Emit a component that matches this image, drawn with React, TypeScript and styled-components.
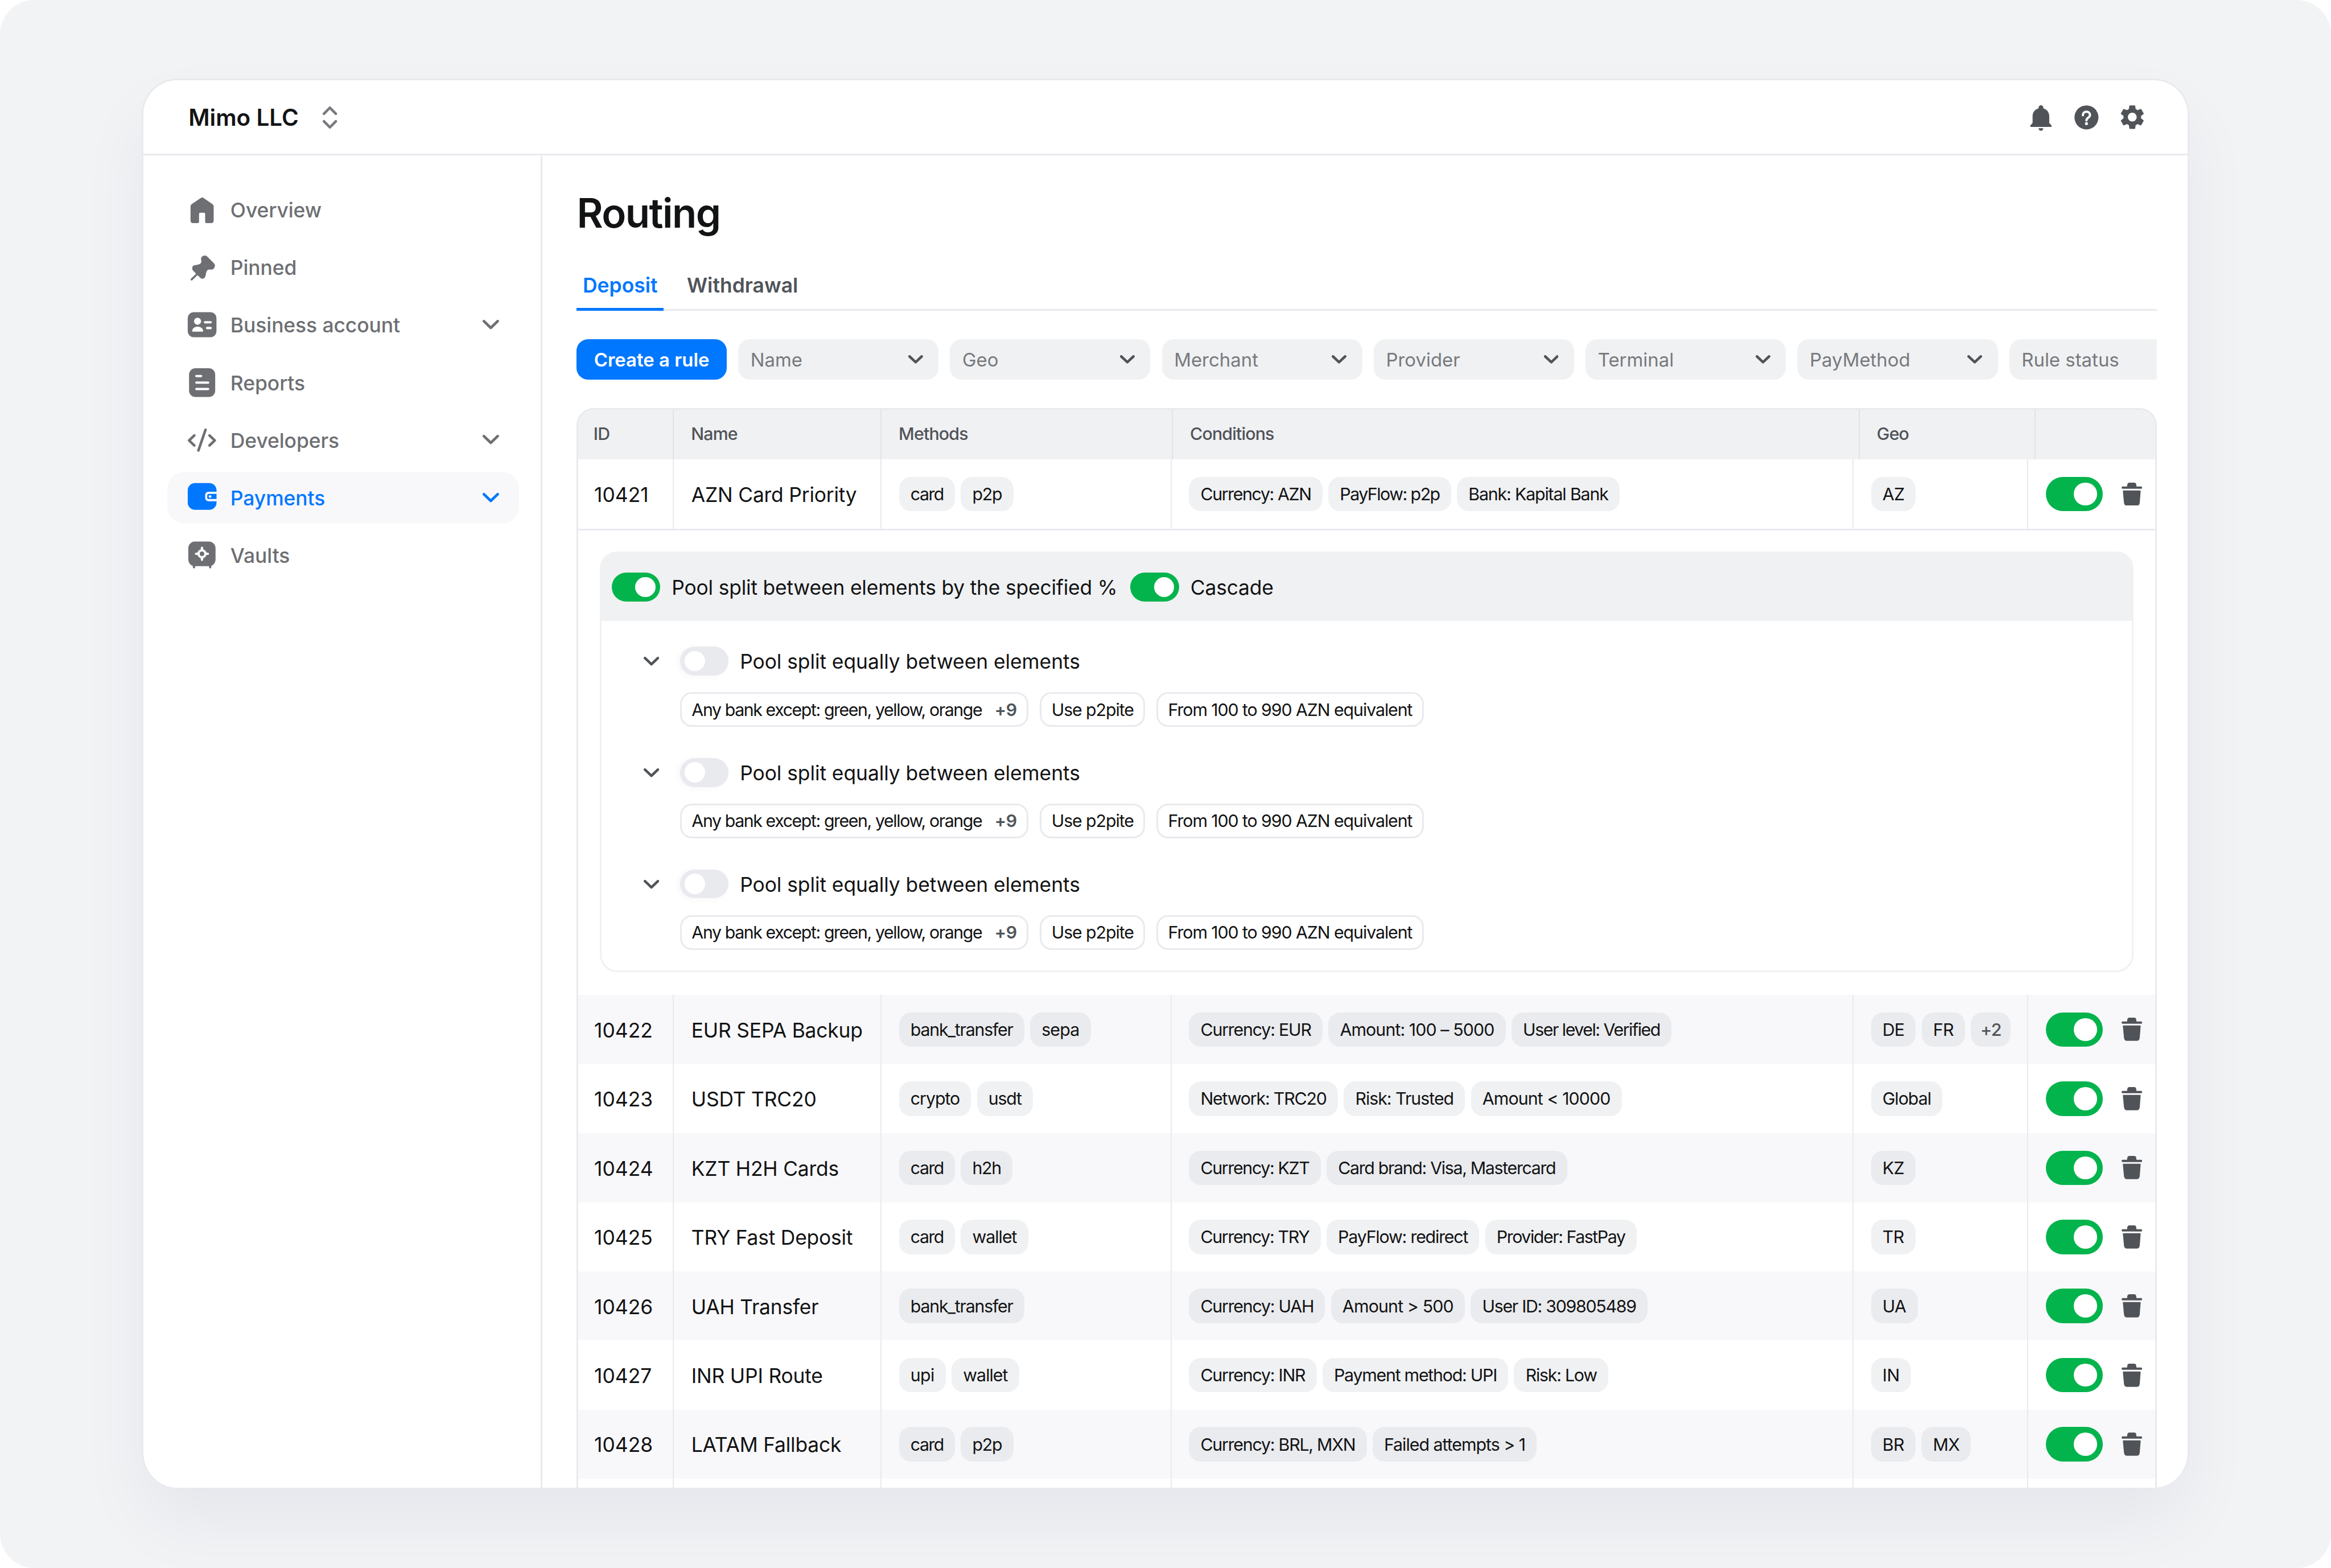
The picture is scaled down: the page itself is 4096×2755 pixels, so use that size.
import React from "react";
import styled, { createGlobalStyle, css } from "styled-components";
import { MdSettings } from "react-icons/md";

const s = (n: number) => `${Math.round(n * 0.9771 * 100) / 100}px`;

const c = {
  ink: "#121314",
  text2: "#505459",
  text3: "#6d6f73",
  text4: "#77797d",
  blue: "#0077ff",
  green: "#03b44c",
  line: "#e9eaee",
  fill: "#f0f1f3",
  stripe: "#f8f8fa",
};

const Global = createGlobalStyle`
  * { box-sizing: border-box; }
  html, body { margin: 0; background: #ffffff; }
  body { font-family: Inter, "Liberation Sans", sans-serif; color: ${c.ink}; overflow: hidden; }
`;

const Stage = styled.div`
  width: 4096px;
  height: 2755px;
  padding: ${s(141)} ${s(255)} ${s(144)};
  border-radius: ${s(62)};
  background: #f2f3f5;
  overflow: hidden;
`;

const Card = styled.div`
  height: 100%;
  display: flex;
  flex-direction: column;
  background: #fff;
  border: 3px solid ${c.line};
  border-bottom: 0;
  border-radius: ${s(64)};
  overflow: hidden;
  box-shadow: 0 ${s(62)} ${s(125)} rgba(20, 24, 70, 0.05);
`;

const TopBar = styled.header`
  flex: none;
  height: ${s(135)};
  display: flex;
  align-items: center;
  justify-content: space-between;
  padding: ${s(2)} ${s(68.5)} 0 ${s(81)};
  border-bottom: 3px solid ${c.line};
`;

const Company = styled.div`
  display: flex;
  align-items: center;
  gap: ${s(42)};
  font-size: ${s(41.4)};
  font-weight: 600;
`;

const TopActions = styled.div`
  display: flex;
  gap: ${s(20.2)};
  color: ${c.text2};
`;

const IconFrame = styled.span`
  flex: none;
  width: ${s(62)};
  height: ${s(62)};
  display: flex;
  align-items: center;
  justify-content: center;
  svg {
    display: block;
  }
`;

const Body = styled.div`
  flex: 1;
  min-height: 0;
  display: flex;
`;

const Sidebar = styled.nav`
  flex: none;
  width: ${s(717.5)};
  padding: ${s(51)} ${s(38.8)} 0 ${s(43.2)};
  display: flex;
  flex-direction: column;
  gap: ${s(9.9)};
  border-right: 3px solid ${c.line};
`;

const NavItem = styled.div<{ $active?: boolean }>`
  flex: none;
  height: ${s(93.7)};
  display: flex;
  align-items: center;
  padding: 0 ${s(36)} 0 ${s(31.4)};
  border-radius: ${s(31)};
  font-size: ${s(36.3)};
  font-weight: 500;
  letter-spacing: ${s(-0.1)};
  color: ${(p) => (p.$active ? c.blue : c.text3)};
  background: ${(p) => (p.$active ? c.stripe : "transparent")};
`;

const NavLabel = styled.span`
  flex: 1;
  margin-left: ${s(19.7)};
  padding-top: ${s(2.6)};
`;

const Main = styled.main`
  flex: 1;
  min-width: 0;
  padding: ${s(53)} ${s(55.5)} 0 ${s(61.6)};
  display: flex;
  flex-direction: column;
`;

const Title = styled.h1`
  margin: 0;
  font-size: ${s(72.5)};
  line-height: ${s(104)};
  font-weight: 600;
  letter-spacing: ${s(-1.6)};
`;

const Tabs = styled.div`
  height: ${s(123)};
  display: flex;
  align-items: flex-end;
  gap: ${s(31)};
  box-shadow: inset 0 -3px 0 ${c.line};
`;

const Tab = styled.div<{ $active?: boolean }>`
  padding: 0 ${s(10.8)} ${s(13.4)};
  border-bottom: 5px solid ${(p) => (p.$active ? c.blue : "transparent")};
  font-size: ${s(36.3)};
  line-height: ${s(52)};
  font-weight: 600;
  color: ${(p) => (p.$active ? c.blue : c.text2)};
`;

const Filters = styled.div`
  margin-top: ${s(51.3)};
  height: ${s(72.4)};
  display: flex;
  gap: ${s(20.7)};
  overflow: hidden;
`;

const PrimaryButton = styled.button`
  flex: none;
  width: ${s(269.7)};
  padding: 0;
  border: 0;
  border-radius: ${s(21)};
  background: ${c.blue};
  color: #fff;
  font: 600 ${s(33.7)} Inter, "Liberation Sans", sans-serif;
`;

const Select = styled.div`
  flex: none;
  width: ${s(360.3)};
  display: flex;
  align-items: center;
  justify-content: space-between;
  padding: 0 ${s(28.2)} 0 ${s(22)};
  border-radius: ${s(21)};
  background: ${c.fill};
  color: ${c.text4};
  font-size: ${s(33.7)};
  svg {
    color: ${c.text2};
  }
`;

const Table = styled.section`
  flex: 1;
  min-height: 0;
  margin-top: ${s(51.3)};
  border: 3px solid ${c.line};
  border-bottom: 0;
  border-radius: ${s(31)} ${s(31)} 0 0;
  overflow: hidden;
`;

const HeadRow = styled.div`
  height: ${s(89)};
  display: flex;
  background: ${c.fill};
  color: ${c.text2};
  font-size: ${s(31.1)};
  font-weight: 500;
  letter-spacing: ${s(-0.9)};
`;

const HeadCell = styled.div<{ $w?: number; $first?: boolean }>`
  flex: ${(p) => (p.$w ? "none" : "1")};
  width: ${(p) => (p.$w ? s(p.$w) : "auto")};
  padding: 0 0 ${s(3)} ${(p) => s(p.$first ? 27 : 30.5)};
  display: flex;
  align-items: center;
  border-right: ${(p) => (p.$w ? "2px solid #e2e3e7" : "0")};
`;

const Row = styled.div<{ $striped?: boolean; $ruled?: boolean }>`
  height: ${(p) => s(p.$ruled ? 127.6 : 124.33)};
  display: flex;
  background: ${(p) => (p.$striped ? c.stripe : "#fff")};
  border-bottom: ${(p) => (p.$ruled ? `3px solid ${c.line}` : "0")};
`;

const Cell = styled.div<{ $w?: number; $gap?: number; $first?: boolean }>`
  flex: ${(p) => (p.$w ? "none" : "1")};
  min-width: ${(p) => (p.$w ? s(p.$w) : "0")};
  padding: 0 ${(p) => s(p.$first ? 20 : p.$w ? 28.5 : 0)} 0 ${(p) => s(p.$first ? 28.2 : 31)};
  display: flex;
  align-items: center;
  gap: ${(p) => s(p.$gap ?? 10.4)};
  border-right: ${(p) => (p.$w ? `2.5px solid ${c.line}` : "0")};
  font-size: ${s(36.3)};
  white-space: nowrap;
`;

const CellText = styled.span<{ $track?: number }>`
  padding-top: ${s(2.6)};
  letter-spacing: ${(p) => s(p.$track ?? 0)};
`;

const chipBase = css<{ $track: number }>`
  height: ${s(62)};
  padding: 0 ${s(20.7)};
  display: flex;
  align-items: center;
  border-radius: ${s(21)};
  font-size: ${s(31.1)};
  letter-spacing: ${(p) => s(p.$track)};
  white-space: pre;
`;

const Chip = styled.span<{ $striped?: boolean; $track: number }>`
  ${chipBase}
  background: ${(p) => (p.$striped ? "#eaebee" : c.fill)};
`;

const MoreChip = styled(Chip)`
  padding: 0 ${s(17)};
  font-weight: 500;
  color: ${c.text2};
`;

const OutlineChip = styled.span<{ $track: number }>`
  ${chipBase}
  padding: 0 ${s(17.7)};
  border: 3px solid ${c.line};
  background: #fff;
`;

const Extra = styled.span`
  margin-left: ${s(23)};
  font-weight: 600;
  letter-spacing: ${s(-0.4)};
  color: ${c.text2};
`;

const Switch = styled.span<{ $on?: boolean; $small?: boolean }>`
  flex: none;
  width: ${(p) => s(p.$small ? 87.2 : 103)};
  height: ${(p) => s(p.$small ? 51.8 : 62)};
  padding: 0 ${(p) => s(p.$small ? 8.4 : 10.4)};
  display: flex;
  align-items: center;
  justify-content: ${(p) => (p.$on ? "flex-end" : "flex-start")};
  border-radius: ${s(31)};
  background: ${(p) => (p.$on ? c.green : "#e9eaee")};
  box-shadow: ${(p) => (p.$on ? "none" : "-4px 2px 12px rgba(0, 0, 0, 0.035)")};
`;

const Knob = styled.span<{ $small?: boolean }>`
  width: ${(p) => s(p.$small ? 36.4 : 41.5)};
  height: ${(p) => s(p.$small ? 36.4 : 41.5)};
  border-radius: 50%;
  background: #fff;
`;

const Expanded = styled.div`
  height: ${s(835.4)};
  padding: ${s(38.4)} ${s(38.2)} ${s(41)};
  background: #fff;
`;

const Panel = styled.div`
  height: 100%;
  border: 3px solid ${c.fill};
  border-radius: ${s(31)};
  overflow: hidden;
`;

const PanelHead = styled.div`
  height: ${s(121)};
  padding-left: ${s(18.6)};
  display: flex;
  align-items: center;
  background: ${c.fill};
  font-size: ${s(36.3)};
  letter-spacing: ${s(-0.24)};
`;

const PanelLabel = styled.span`
  margin: 0 ${s(23.6)} 0 ${s(20.7)};
  padding-top: ${s(1.6)};
`;

const PanelBody = styled.div`
  padding: ${s(46.4)} 0 0 ${s(75.6)};
  display: flex;
  flex-direction: column;
  gap: ${s(56.3)};
`;

const Group = styled.div`
  display: flex;
  flex-direction: column;
  gap: ${s(30.2)};
`;

const GroupHead = styled.div`
  height: ${s(52)};
  display: flex;
  align-items: center;
  font-size: ${s(36.3)};
  letter-spacing: ${s(-0.1)};
  svg {
    color: ${c.text2};
    margin: ${s(2.4)} ${s(38)} 0 0;
  }
`;

const GroupLabel = styled.span`
  margin-left: ${s(20.4)};
  padding-top: ${s(2.4)};
`;

const GroupChips = styled.div`
  display: flex;
  gap: ${s(20.7)};
  padding-left: ${s(66)};
`;

/* ---------- icons ---------- */

const Svg = ({ w, h, box, children }: { w: number; h: number; box?: string; children: React.ReactNode }) => (
  <svg width={w * 0.9771} height={h * 0.9771} viewBox={box ?? `0 0 ${w} ${h}`} fill="currentColor">
    {children}
  </svg>
);

const Chevron = ({ w = 26.5, t = 4.6 }: { w?: number; t?: number }) => (
  <Svg w={w} h={w * 0.6}>
    <path
      d={`M${t / 2} ${t / 2}L${w / 2} ${w * 0.6 - t / 2 - 1}L${w - t / 2} ${t / 2}`}
      fill="none"
      stroke="currentColor"
      strokeWidth={t}
      strokeLinecap="round"
      strokeLinejoin="round"
    />
  </Svg>
);

const UpDown = () => (
  <Svg w={28} h={42}>
    <g fill="none" stroke={c.text4} strokeWidth="4.6" strokeLinecap="round" strokeLinejoin="round">
      <path d="M3.3 14.2L14 3.3L24.7 14.2" />
      <path d="M3.3 27.8L14 38.7L24.7 27.8" />
    </g>
  </Svg>
);

const Home = () => (
  <Svg w={62} h={62}>
    <path
      transform="translate(-12 -5) scale(.33333)"
      d="M121 46Q129 40 137 46L185 79Q191 84 191 92V166Q191 181 177 181H151Q145 181 145 174V132Q145 125 138 125H119Q112 125 112 132V174Q112 181 105 181H80Q66 181 66 166V92Q66 84 72 79Z"
    />
  </Svg>
);

const Pin = () => (
  <Svg w={62} h={62}>
    <g transform="translate(-12 -108.7) scale(.33333)">
      <path d="M124 384C119 368 130 357 142 357C150 357 155 361 160 366L190 396C197 402 199 410 197 417C194 428 186 434 176 433C163 430 156 434 152 444C149 452 149 460 146 469C142 482 130 486 120 478L81 440C72 430 73 415 85 410C95 407 104 409 113 404C122 400 127 393 124 384Z" />
      <path d="M72 486L106 453" stroke="currentColor" strokeWidth="11" strokeLinecap="round" />
    </g>
  </Svg>
);

const Business = () => (
  <Svg w={62} h={62}>
    <g transform="translate(-12 -212.3) scale(.33333)">
      <rect x="51" y="663" width="155" height="135" rx="32" />
      <g fill="#fff">
        <circle cx="104" cy="712" r="19" />
        <path d="M75 764C76 749 89 741 104 741C120 741 133 749 134 764Q134 768 130 768H79Q75 768 75 764Z" />
        <rect x="138" y="711" width="43" height="13" rx="6.5" />
        <rect x="149" y="742" width="32" height="13" rx="6.5" />
      </g>
    </g>
  </Svg>
);

const Reports = () => (
  <Svg w={62} h={62}>
    <rect x="7.4" y="5.1" width="47" height="51.7" rx="11.5" />
    <g fill="#fff">
      <rect x="18.5" y="17.1" width="12.5" height="4.2" rx="2" />
      <rect x="18.5" y="28.8" width="25.2" height="4.2" rx="2" />
      <rect x="18.5" y="40.4" width="25.2" height="4.2" rx="2" />
    </g>
  </Svg>
);

const Developers = () => (
  <Svg w={62} h={62}>
    <g fill="none" stroke="currentColor" strokeWidth="4.6" strokeLinecap="round" strokeLinejoin="round">
      <path d="M16.8 22.6L7.4 31.6L16.8 40.6" />
      <path d="M44.2 22.6L53.6 31.6L44.2 40.6" />
      <path d="M37 12.4L24.2 49.6" />
    </g>
  </Svg>
);

const Wallet = () => (
  <Svg w={62} h={62}>
    <rect x="5" y="4.9" width="51.8" height="48" rx="13" />
    <path d="M58 20.4H43Q36.3 20.4 36.3 27V31Q36.3 37.6 43 37.6H58Z" fill={c.stripe} />
    <path d="M56.8 24.4H43Q40 24.4 40 27.4V30.6Q40 33.6 43 33.6H56.8Z" />
    <circle cx="45.2" cy="29" r="2.4" fill={c.stripe} />
  </Svg>
);

const Vault = () => (
  <Svg w={62} h={62}>
    <rect x="6" y="6.6" width="49" height="44.4" rx="12" />
    <path d="M16.2 46V53M45.4 46V53" stroke="currentColor" strokeWidth="4" strokeLinecap="round" />
    <g fill="none" stroke="#fff" strokeWidth="4.2" strokeLinecap="round">
      <path d="M30.6 18V22M30.6 35.4V39.4M20 28.7H24M37.2 28.7H41.2" />
      <circle cx="30.6" cy="28.7" r="6.2" />
    </g>
  </Svg>
);

const Bell = () => (
  <Svg w={62} h={62}>
    <path d="M31 9.3A4.3 4.3 0 0 1 35.3 13.6V14.8C42 16.5 46 22 46 29V41L50 45.5C50.8 46.5 50.3 48 49 48H13C11.7 48 11.2 46.5 12 45.5L16 41V29C16 22 20 16.5 26.7 14.8V13.6A4.3 4.3 0 0 1 31 9.3Z" />
    <path d="M26.8 50.4H35.2A4.2 4.6 0 0 1 26.8 50.4Z" />
  </Svg>
);

const Help = () => (
  <Svg w={62} h={62}>
    <circle cx="31" cy="31" r="21.6" />
    <path
      d="M24.6 27C24.6 23.3 27.3 20.8 31 20.8C34.8 20.8 37.4 23.4 37.4 26.8C37.4 31.4 31 31.4 31 36.4"
      fill="none"
      stroke="#fff"
      strokeWidth="4"
      strokeLinecap="round"
    />
    <circle cx="31" cy="42.2" r="2.7" fill="#fff" />
  </Svg>
);

const TrashSlot = styled(IconFrame)`
  color: ${c.text2};
`;

const Trash = () => (
  <Svg w={37} h={41.7} box="426 96 111 125">
    <rect x="426" y="117" width="111" height="12" rx="6" />
    <path d="M455 122L457 106Q459 96 468 96H495Q503 96 505 106L507 122Z" />
    <path d="M436 138H526Q529 138 529 141L524 205Q522 221 508 221H455Q441 221 439 205L433 141Q433 138 436 138Z" />
  </Svg>
);

/* ---------- data ---------- */

type Rule = { id: string; name: string; methods: string[]; conditions: string[]; geo: string[] };

const first: Rule = {
  id: "10421",
  name: "AZN Card Priority",
  methods: ["card", "p2p"],
  conditions: ["Currency: AZN", "PayFlow: p2p", "Bank: Kapital Bank"],
  geo: ["AZ"],
};

const rules: Rule[] = [
  { id: "10422", name: "EUR SEPA Backup", methods: ["bank_transfer", "sepa"], conditions: ["Currency: EUR", "Amount: 100 – 5000", "User level: Verified"], geo: ["DE", "FR", "+2"] },
  { id: "10423", name: "USDT TRC20", methods: ["crypto", "usdt"], conditions: ["Network: TRC20", "Risk: Trusted", "Amount < 10000"], geo: ["Global"] },
  { id: "10424", name: "KZT H2H Cards", methods: ["card", "h2h"], conditions: ["Currency: KZT", "Card brand: Visa, Mastercard"], geo: ["KZ"] },
  { id: "10425", name: "TRY Fast Deposit", methods: ["card", "wallet"], conditions: ["Currency: TRY", "PayFlow: redirect", "Provider: FastPay"], geo: ["TR"] },
  { id: "10426", name: "UAH Transfer", methods: ["bank_transfer"], conditions: ["Currency: UAH", "Amount > 500", "User ID: 309805489"], geo: ["UA"] },
  { id: "10427", name: "INR UPI Route", methods: ["upi", "wallet"], conditions: ["Currency: INR", "Payment method: UPI", "Risk: Low"], geo: ["IN"] },
  { id: "10428", name: "LATAM Fallback", methods: ["card", "p2p"], conditions: ["Currency: BRL, MXN", "Failed attempts > 1"], geo: ["BR", "MX"] },
];

const defaultTrack = -1.3;
const tracking: Record<string, number> = {
  "Currency: AZN": -1.45,
  "PayFlow: p2p": -1.6,
  "Bank: Kapital Bank": -1.22,
  "Currency: EUR": -1.25,
  "Amount: 100 – 5000": -0.95,
  "User level: Verified": -1.55,
  "Network: TRC20": -1.25,
  "Risk: Trusted": -1.05,
  "Amount < 10000": -0.95,
  "Currency: KZT": -1.4,
  "Card brand: Visa, Mastercard": -1.38,
  "Currency: TRY": -1.4,
  "PayFlow: redirect": -1.25,
  "Provider: FastPay": -1.5,
  "Amount > 500": -0.9,
  "User ID: 309805489": -1.36,
  "Failed attempts > 1": -1.05,
  "Any bank except: green, yellow, orange": -1.47,
  "Use p2pite": -1.15,
  "From 100 to 990 AZN equivalent": -1.15,
  card: -1.6,
  sepa: -0.93,
  crypto: -1.1,
  wallet: -1.05,
  upi: -0.7,
  Global: -1.08,
  DE: -0.9,
  FR: -0.7,
  AZ: -0.8,
  KZ: -0.8,
  TR: -0.7,
  UA: -0.7,
  IN: -0.5,
  BR: -0.7,
  MX: -0.7,
  "+2": -0.6,
};
const track = (t: string) => tracking[t] ?? defaultTrack;

const nav = [
  { label: "Overview", icon: <Home /> },
  { label: "Pinned", icon: <Pin /> },
  { label: "Business account", icon: <Business />, open: true },
  { label: "Reports", icon: <Reports /> },
  { label: "Developers", icon: <Developers />, open: true },
  { label: "Payments", icon: <Wallet />, open: true, active: true },
  { label: "Vaults", icon: <Vault /> },
];

const Toggle = ({ on, small }: { on?: boolean; small?: boolean }) => (
  <Switch $on={on} $small={small}>
    <Knob $small={small} />
  </Switch>
);

const Chips = ({ items, striped }: { items: string[]; striped?: boolean }) => (
  <>
    {items.map((t) => {
      const Kind = t.startsWith("+") ? MoreChip : Chip;
      return (
        <Kind key={t} $striped={striped} $track={track(t)}>
          {t}
        </Kind>
      );
    })}
  </>
);

const RuleCells = ({ rule, striped }: { rule?: Rule; striped?: boolean }) => (
  <>
    <Cell $w={172} $first>
      <CellText>{rule?.id}</CellText>
    </Cell>
    <Cell $w={373.4}>
      <CellText $track={-0.25}>{rule?.name}</CellText>
    </Cell>
    <Cell $w={521.6}>{rule && <Chips items={rule.methods} striped={striped} />}</Cell>
    <Cell $w={1226.4}>{rule && <Chips items={rule.conditions} striped={striped} />}</Cell>
    <Cell $w={314.2}>{rule && <Chips items={rule.geo} striped={striped} />}</Cell>
    <Cell $gap={20.7}>
      {rule && (
        <>
          <Toggle on />
          <TrashSlot>
            <Trash />
          </TrashSlot>
        </>
      )}
    </Cell>
  </>
);

export default function App() {
  return (
    <Stage>
      <Global />
      <Card>
        <TopBar>
          <Company>
            Mimo LLC
            <UpDown />
          </Company>
          <TopActions>
            <IconFrame>
              <Bell />
            </IconFrame>
            <IconFrame>
              <Help />
            </IconFrame>
            <IconFrame>
              <MdSettings size={51.6} />
            </IconFrame>
          </TopActions>
        </TopBar>
        <Body>
          <Sidebar>
            {nav.map((n) => (
              <NavItem key={n.label} $active={n.active}>
                <IconFrame>{n.icon}</IconFrame>
                <NavLabel>{n.label}</NavLabel>
                {n.open && <Chevron w={29.5} t={4.8} />}
              </NavItem>
            ))}
          </Sidebar>
          <Main>
            <Title>Routing</Title>
            <Tabs>
              <Tab $active>Deposit</Tab>
              <Tab>Withdrawal</Tab>
            </Tabs>
            <Filters>
              <PrimaryButton>Create a rule</PrimaryButton>
              {["Name", "Geo", "Merchant", "Provider", "Terminal", "PayMethod", "Rule status"].map((f) => (
                <Select key={f}>
                  {f}
                  <Chevron />
                </Select>
              ))}
            </Filters>
            <Table>
              <HeadRow>
                <HeadCell $w={172} $first>ID</HeadCell>
                <HeadCell $w={373.4}>Name</HeadCell>
                <HeadCell $w={524}>Methods</HeadCell>
                <HeadCell $w={1235}>Conditions</HeadCell>
                <HeadCell $w={316}>Geo</HeadCell>
                <HeadCell />
              </HeadRow>
              <Row $ruled>
                <RuleCells rule={first} />
              </Row>
              <Expanded>
                <Panel>
                  <PanelHead>
                    <Toggle on small />
                    <PanelLabel>Pool split between elements by the specified %</PanelLabel>
                    <Toggle on small />
                    <PanelLabel>Cascade</PanelLabel>
                  </PanelHead>
                  <PanelBody>
                    {[0, 1, 2].map((i) => (
                      <Group key={i}>
                        <GroupHead>
                          <Chevron w={28} />
                          <Toggle small />
                          <GroupLabel>Pool split equally between elements</GroupLabel>
                        </GroupHead>
                        <GroupChips>
                          <OutlineChip $track={track("Any bank except: green, yellow, orange")}>
                            Any bank except: green, yellow, orange
                            <Extra>+9</Extra>
                          </OutlineChip>
                          {["Use p2pite", "From 100 to 990 AZN equivalent"].map((t) => (
                            <OutlineChip key={t} $track={track(t)}>
                              {t}
                            </OutlineChip>
                          ))}
                        </GroupChips>
                      </Group>
                    ))}
                  </PanelBody>
                </Panel>
              </Expanded>
              {rules.map((r, i) => (
                <Row key={r.id} $striped={i % 2 === 0}>
                  <RuleCells rule={r} striped={i % 2 === 0} />
                </Row>
              ))}
              <Row>
                <RuleCells />
              </Row>
            </Table>
          </Main>
        </Body>
      </Card>
    </Stage>
  );
}
